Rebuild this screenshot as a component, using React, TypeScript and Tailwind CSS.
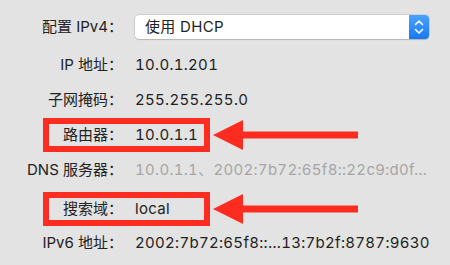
import React from 'react';

interface rowInterface {
  label: string;
  value: string;
  height: string;
  muted?: boolean;
  marked?: boolean;
}

const rows: rowInterface[] = [
  { label: 'IP 地址：', value: '10.0.1.201', height: 'h-[36px]' },
  { label: '子网掩码：', value: '255.255.255.0', height: 'h-[35px]' },
  { label: '路由器：', value: '10.0.1.1', height: 'h-[34px]', marked: true },
  {
    label: 'DNS 服务器：',
    value: '10.0.1.1、2002:7b72:65f8::22c9:d0f…',
    height: 'h-[37px]',
    muted: true,
  },
  { label: '搜索域：', value: 'local', height: 'h-[34px] mt-[3px]', marked: true },
  { label: 'IPv6 地址：', value: '2002:7b72:65f8::…13:7b2f:8787:9630', height: 'h-[35px]' },
];

// red annotation: frame round the row plus an arrow pointing at it
function Marker() {
  return (
    <>
      <div className="absolute left-[43px] top-0 w-[167px] h-[34px] border-[6px] border-[#fd2c20]" />
      <svg
        className="absolute left-[213px] top-[1px]"
        width="146"
        height="32"
        viewBox="0 0 146 32"
      >
        <polygon points="0,16 30,1 30,12.5 145,12.5 145,19.5 30,19.5 30,31" fill="#fd2c20" />
      </svg>
    </>
  );
}

export default function App() {
  return (
    <div
      className="w-[450px] h-[265px] bg-[#e3e3e3] overflow-hidden text-[15px] text-[#222222]"
      style={{ fontFamily: 'Inter, "Noto Sans CJK SC", sans-serif' }}
    >
      <div className="flex flex-col pt-[15px]">
        {/* Configure IPv4 popup */}
        <div className="flex items-center h-[24px]">
          <div className="w-[123px] text-right whitespace-nowrap">配置 IPv4：</div>
          <div className="ml-[12px] w-[294px] h-[24px] flex bg-white rounded-[4px] shadow-[0_0_0_0.5px_rgba(0,0,0,0.18),0_1px_1px_rgba(0,0,0,0.12)]">
            <span className="flex-1 pl-[10px] leading-[24px] tracking-[0.3px]">使用 DHCP</span>
            <div className="w-[20px] h-full rounded-r-[4px] bg-gradient-to-b from-[#4aa3ff] to-[#1677f2] flex items-center justify-center">
              <svg width="10" height="16" viewBox="0 0 10 16" fill="none">
                <path d="M1.5 5.5 L5 2 L8.5 5.5" stroke="white" strokeWidth="1.6" strokeLinecap="round" strokeLinejoin="round" />
                <path d="M1.5 10.5 L5 14 L8.5 10.5" stroke="white" strokeWidth="1.6" strokeLinecap="round" strokeLinejoin="round" />
              </svg>
            </div>
          </div>
        </div>

        <div className="mt-[8px] flex flex-col">
          {rows.map((row) => (
            <div key={row.label} className={`relative flex items-center ${row.height}`}>
              <div className="w-[123px] text-right whitespace-nowrap">{row.label}</div>
              <div
                className={`ml-[12px] whitespace-nowrap tabular-nums tracking-[0.3px] ${
                  row.muted ? 'text-[#a6a6a6]' : 'text-[#222222]'
                }`}
              >
                {row.value}
              </div>
              {row.marked && <Marker />}
            </div>
          ))}
        </div>
      </div>
    </div>
  );
}
